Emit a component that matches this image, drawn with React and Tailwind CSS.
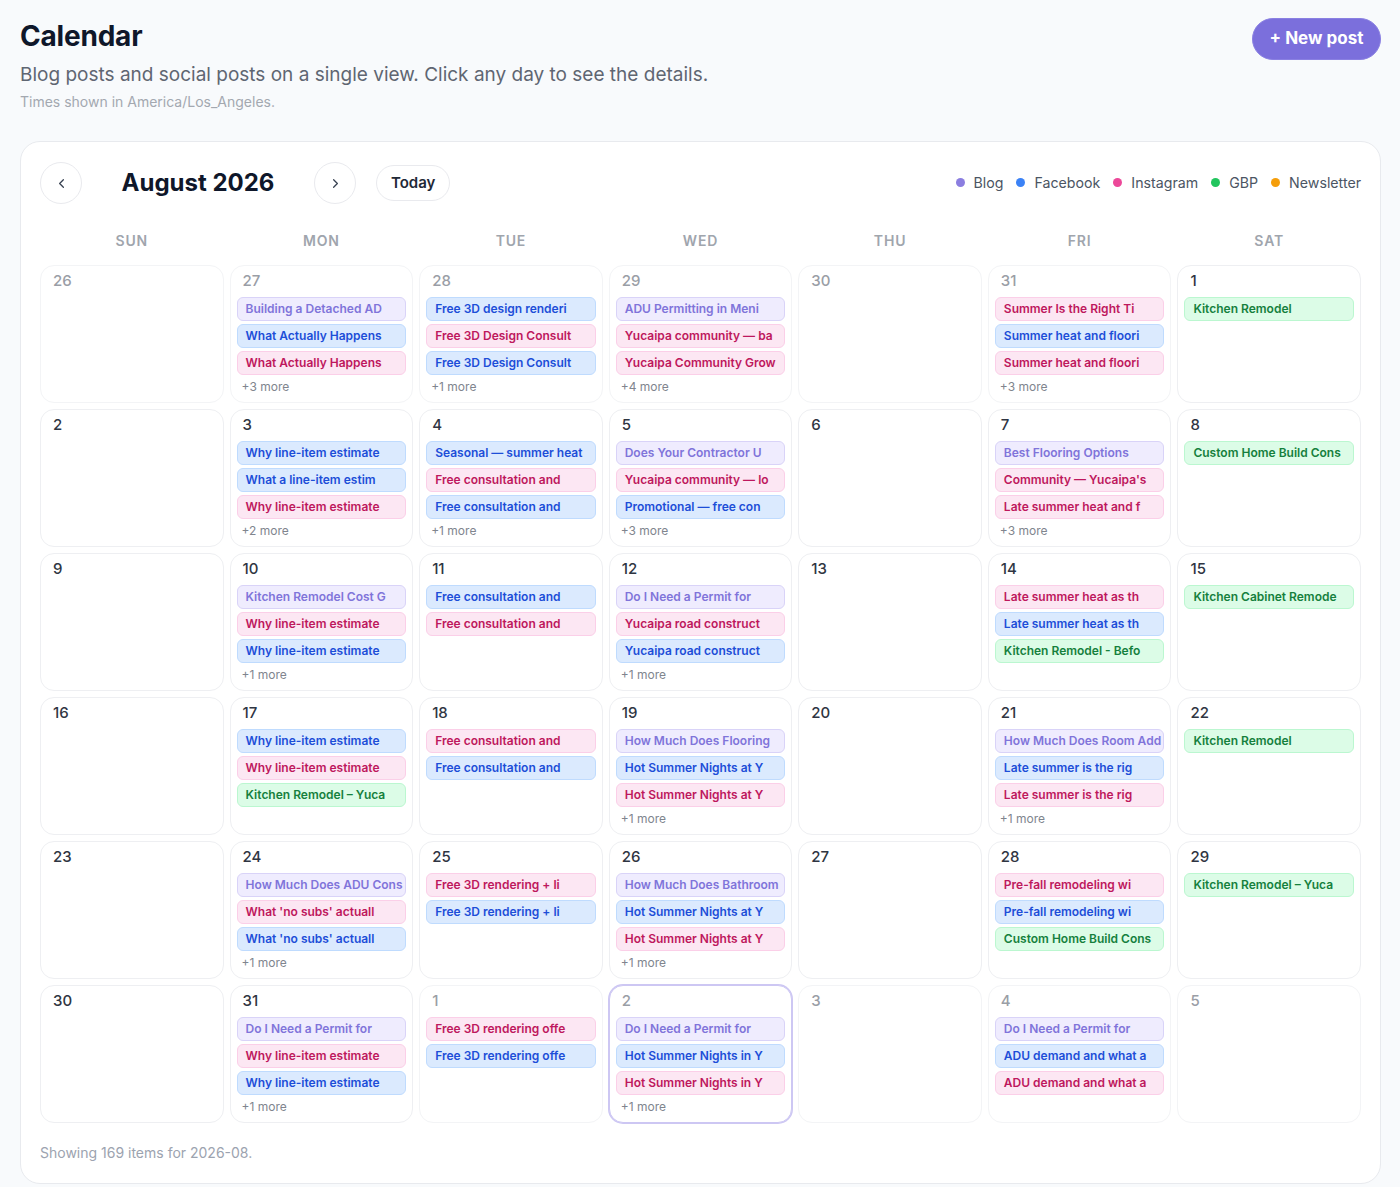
import { ChevronLeft, ChevronRight } from "lucide-react";

// channel styles for chips and legend
const KINDS = {
  b: { chip: "bg-[#efecfe] border-[#d9d3f8] text-[#8074da]", dot: "bg-[#8b7ee0]", label: "Blog" },
  f: { chip: "bg-[#dbeafe] border-[#bfdbfe] text-[#1d4ed8]", dot: "bg-[#3b82f6]", label: "Facebook" },
  i: { chip: "bg-[#fce7f3] border-[#fbcfe8] text-[#be185d]", dot: "bg-[#ec4899]", label: "Instagram" },
  g: { chip: "bg-[#dcfce7] border-[#bbf7d0] text-[#15803d]", dot: "bg-[#22c55e]", label: "GBP" },
  n: { chip: "bg-amber-100 border-amber-200 text-amber-700", dot: "bg-[#f59e0b]", label: "Newsletter" },
};
const LEGEND = ["b", "f", "i", "g", "n"];
const WEEKDAYS = ["SUN", "MON", "TUE", "WED", "THU", "FRI", "SAT"];

// [day, outsideMonth, posts, extra, selected]
const WEEKS = [
  [
    [26, true, [], 0],
    [27, true, [["b", "Building a Detached AD"], ["f", "What Actually Happens"], ["i", "What Actually Happens"]], 3],
    [28, true, [["f", "Free 3D design renderi"], ["i", "Free 3D Design Consult"], ["f", "Free 3D Design Consult"]], 1],
    [29, true, [["b", "ADU Permitting in Meni"], ["i", "Yucaipa community — ba"], ["i", "Yucaipa Community Grow"]], 4],
    [30, true, [], 0],
    [31, true, [["i", "Summer Is the Right Ti"], ["f", "Summer heat and floori"], ["i", "Summer heat and floori"]], 3],
    [1, false, [["g", "Kitchen Remodel"]], 0],
  ],
  [
    [2, false, [], 0],
    [3, false, [["f", "Why line-item estimate"], ["f", "What a line-item estim"], ["i", "Why line-item estimate"]], 2],
    [4, false, [["f", "Seasonal — summer heat"], ["i", "Free consultation and"], ["f", "Free consultation and"]], 1],
    [5, false, [["b", "Does Your Contractor U"], ["i", "Yucaipa community — lo"], ["f", "Promotional — free con"]], 3],
    [6, false, [], 0],
    [7, false, [["b", "Best Flooring Options"], ["i", "Community — Yucaipa's"], ["i", "Late summer heat and f"]], 3],
    [8, false, [["g", "Custom Home Build Cons"]], 0],
  ],
  [
    [9, false, [], 0],
    [10, false, [["b", "Kitchen Remodel Cost G"], ["i", "Why line-item estimate"], ["f", "Why line-item estimate"]], 1],
    [11, false, [["f", "Free consultation and"], ["i", "Free consultation and"]], 0],
    [12, false, [["b", "Do I Need a Permit for"], ["i", "Yucaipa road construct"], ["f", "Yucaipa road construct"]], 1],
    [13, false, [], 0],
    [14, false, [["i", "Late summer heat as th"], ["f", "Late summer heat as th"], ["g", "Kitchen Remodel - Befo"]], 0],
    [15, false, [["g", "Kitchen Cabinet Remode"]], 0],
  ],
  [
    [16, false, [], 0],
    [17, false, [["f", "Why line-item estimate"], ["i", "Why line-item estimate"], ["g", "Kitchen Remodel – Yuca"]], 0],
    [18, false, [["i", "Free consultation and"], ["f", "Free consultation and"]], 0],
    [19, false, [["b", "How Much Does Flooring"], ["f", "Hot Summer Nights at Y"], ["i", "Hot Summer Nights at Y"]], 1],
    [20, false, [], 0],
    [21, false, [["b", "How Much Does Room Add"], ["f", "Late summer is the rig"], ["i", "Late summer is the rig"]], 1],
    [22, false, [["g", "Kitchen Remodel"]], 0],
  ],
  [
    [23, false, [], 0],
    [24, false, [["b", "How Much Does ADU Cons"], ["i", "What 'no subs' actuall"], ["f", "What 'no subs' actuall"]], 1],
    [25, false, [["i", "Free 3D rendering + li"], ["f", "Free 3D rendering + li"]], 0],
    [26, false, [["b", "How Much Does Bathroom"], ["f", "Hot Summer Nights at Y"], ["i", "Hot Summer Nights at Y"]], 1],
    [27, false, [], 0],
    [28, false, [["i", "Pre-fall remodeling wi"], ["f", "Pre-fall remodeling wi"], ["g", "Custom Home Build Cons"]], 0],
    [29, false, [["g", "Kitchen Remodel – Yuca"]], 0],
  ],
  [
    [30, false, [], 0],
    [31, false, [["b", "Do I Need a Permit for"], ["i", "Why line-item estimate"], ["f", "Why line-item estimate"]], 1],
    [1, true, [["i", "Free 3D rendering offe"], ["f", "Free 3D rendering offe"]], 0],
    [2, true, [["b", "Do I Need a Permit for"], ["f", "Hot Summer Nights in Y"], ["i", "Hot Summer Nights in Y"]], 1, true],
    [3, true, [], 0],
    [4, true, [["b", "Do I Need a Permit for"], ["f", "ADU demand and what a"], ["i", "ADU demand and what a"]], 0],
    [5, true, [], 0],
  ],
];

function DayCell({ day, outside, posts, extra, selected }) {
  return (
    <div
      className={`h-[138px] rounded-[14px] border bg-white px-[6px] pt-[5px] cursor-pointer ${
        selected ? "border-[#cdc7f3] ring-1 ring-[#cdc7f3]" : outside ? "border-[#f3f4f6]" : "border-[#eeeff2]"
      }`}
    >
      <div className={`ml-[6px] h-[20px] text-[15px] leading-[20px] font-medium ${outside ? "text-[#9a9ea6]" : "text-[#2f3542]"}`}>
        {day}
      </div>
      <div className="mt-[6px] flex flex-col gap-[3px]">
        {posts.map(([k, title], i) => (
          <div
            key={i}
            className={`h-[24px] rounded-[6px] border pl-[8px] text-[12px] leading-[22px] font-semibold whitespace-nowrap overflow-hidden ${KINDS[k].chip}`}
          >
            {title}
          </div>
        ))}
      </div>
      {extra > 0 && (
        <div className="mt-[3px] ml-[5px] text-[12px] leading-[18px] text-[#80858e]">+{extra} more</div>
      )}
    </div>
  );
}

export default function App() {
  return (
    <div
      className="min-h-screen bg-[#f8fafc] pl-5 pr-[19px] pb-[5px]"
      style={{ fontFamily: "Inter, 'Noto Sans', sans-serif" }}
    >
      <div className="flex items-start justify-between pt-[18px]">
        <div>
          <h1 className="text-[28px] leading-[36px] font-bold text-[#0f172a] tracking-[-0.2px]">Calendar</h1>
          <p className="mt-[7px] text-[19px] leading-[28px] text-[#5f6672]">
            Blog posts and social posts on a single view. Click any day to see the details.
          </p>
          <p className="mt-[3px] text-[14px] leading-[20px] text-[#a3a8b0]">Times shown in America/Los_Angeles.</p>
        </div>
        <button className="h-[42px] w-[129px] rounded-full bg-[#7b6fdc] border border-[#8a80e2] text-white text-[17px] font-bold">
          + New post
        </button>
      </div>

      <div className="mt-[29px] rounded-[20px] border border-[#e8eaee] bg-white px-[19px] pt-[20px] pb-[20px]">
        <div className="flex items-center">
          <button className="h-[42px] w-[42px] rounded-full border border-[#e9eaee] flex items-center justify-center text-[#374151]">
            <ChevronLeft size={15} strokeWidth={2} />
          </button>
          <div className="w-[232px] text-center text-[24px] font-bold text-[#0f172a]">August 2026</div>
          <button className="h-[42px] w-[42px] rounded-full border border-[#e9eaee] flex items-center justify-center text-[#374151]">
            <ChevronRight size={15} strokeWidth={2} />
          </button>
          <button className="ml-5 h-[36px] px-[14px] rounded-full border border-[#e9eaee] text-[15px] font-semibold text-[#1f2937]">
            Today
          </button>
          <div className="ml-auto flex items-center gap-[13px]">
            {LEGEND.map((k) => (
              <div key={k} className="flex items-center gap-[9px]">
                <span className={`h-[9px] w-[9px] rounded-full ${KINDS[k].dot}`} />
                <span className="text-[14.2px] text-[#4b5563]">{KINDS[k].label}</span>
              </div>
            ))}
          </div>
        </div>

        <div className="mt-[26px] grid grid-cols-7 gap-[6px]">
          {WEEKDAYS.map((d) => (
            <div key={d} className="text-center text-[14px] leading-[22px] font-semibold tracking-[0.06em] text-[#a0a5ad]">
              {d}
            </div>
          ))}
        </div>

        <div className="mt-[13px] grid grid-cols-7 gap-[6px]">
          {WEEKS.flat().map(([day, outside, posts, extra, selected], i) => (
            <DayCell key={i} day={day} outside={outside} posts={posts} extra={extra} selected={selected} />
          ))}
        </div>

        <p className="mt-[20px] text-[14px] leading-[20px] text-[#9ca3af]">Showing 169 items for 2026-08.</p>
      </div>
    </div>
  );
}
